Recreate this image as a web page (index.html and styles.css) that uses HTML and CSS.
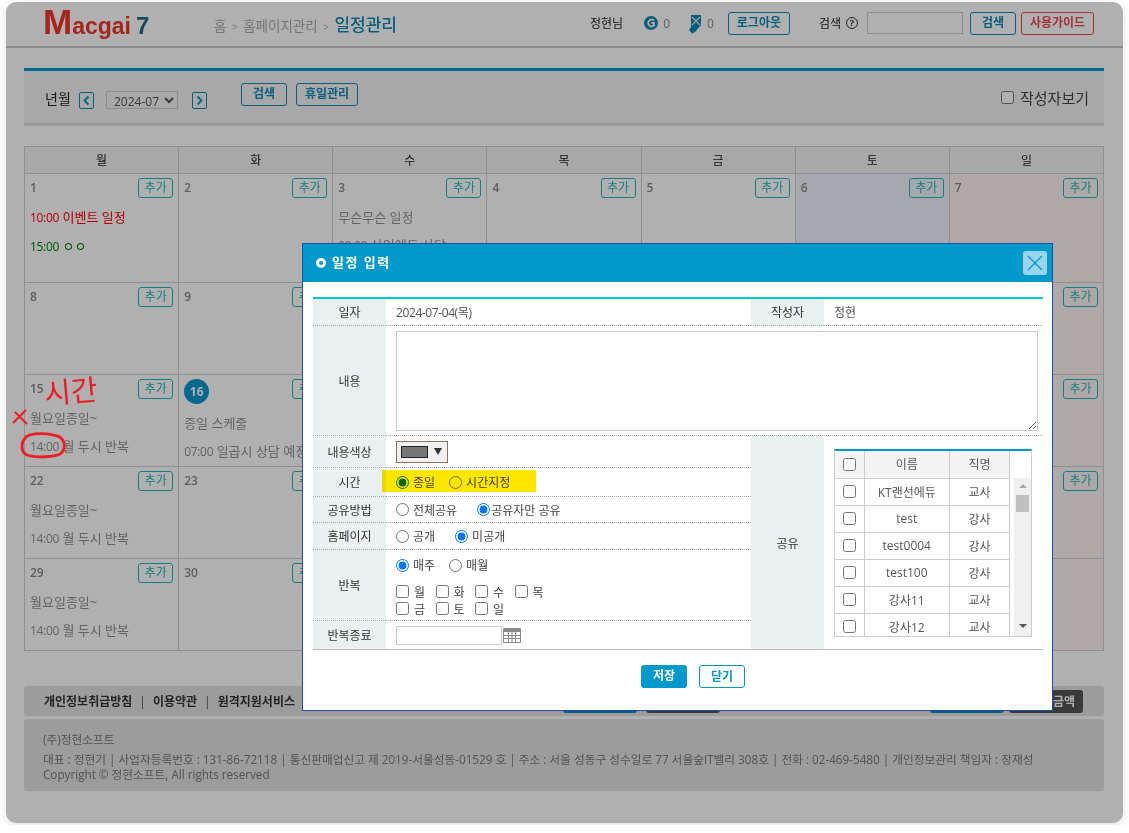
FILE: index.html
```html
<!DOCTYPE html>
<html lang="ko">
<head>
    <meta charset="UTF-8">
    <title>일정관리</title>
    <link rel="stylesheet" href="styles.css">
</head>
<body>

<div class="page">

    <!-- Top header -->
    <div class="header">
        <div class="logo"><span class="logo-m">M</span>acgai<span class="logo-7">7</span></div>
        <div class="crumbs">홈 <small>&gt;</small> 홈페이지관리 <small>&gt;</small> <b>일정관리</b></div>
        <div class="user">
            <span class="user-name">정현님</span>
            <svg class="ico-coin" width="14" height="14" viewBox="0 0 14 14"><circle cx="7" cy="7" r="7" fill="#0a86b4"/><path d="M10 4.6A3.4 3.4 0 1 0 10 9.4V6.9H7.4" fill="none" stroke="#f2f2f2" stroke-width="2"/></svg>
            <span class="count">0</span>
            <svg class="ico-ticket" width="14" height="20" viewBox="0 0 14 20"><path d="M3 1H13V11L7 18L4 19.5L1 16L3 13Z" fill="#0a86b4"/><path d="M4 3L12 11M12 3L4 11" stroke="#e8e8e8" stroke-width="1.3"/></svg>
            <span class="count">0</span>
            <a class="btn btn-logout">로그아웃</a>
            <span class="search-label">검색</span>
            <span class="help">?</span>
            <input class="search-input" type="text">
            <a class="btn btn-search">검색</a>
            <a class="btn btn-red">사용가이드</a>
        </div>
    </div>

    <!-- Search toolbar -->
    <div class="toolbar">
        <div class="month">
            <span class="month-label">년월</span>
            <a class="arrow"><svg width="9" height="11" viewBox="0 0 9 11"><path d="M6.5 1.5L2.5 5.5L6.5 9.5" fill="none" stroke="#0099cc" stroke-width="2"/></svg></a>
            <select class="month-select"><option>2024-07</option></select>
            <a class="arrow"><svg width="9" height="11" viewBox="0 0 9 11"><path d="M2.5 1.5L6.5 5.5L2.5 9.5" fill="none" stroke="#0099cc" stroke-width="2"/></svg></a>
        </div>
        <a class="btn btn-search btn-tool">검색</a>
        <a class="btn btn-holiday btn-tool">휴일관리</a>
        <label class="writer"><input type="checkbox">작성자보기</label>
    </div>

    <!-- Calendar -->
    <table class="calendar">
        <thead>
            <tr><th>월</th><th>화</th><th>수</th><th>목</th><th>금</th><th>토</th><th>일</th></tr>
        </thead>
        <tbody>
            <tr class="week-first">
                <td><div class="day"><span>1</span><a class="add">추가</a></div><p class="ev ev-red"><span class="tm">10:00</span> 이벤트 일정</p><p class="ev ev-green"><span class="tm">15:00</span> ㅇㅇ</p></td>
                <td><div class="day"><span>2</span><a class="add">추가</a></div></td>
                <td><div class="day"><span>3</span><a class="add">추가</a></div><p class="ev">무슨무슨 일정</p><p class="ev"><span class="tm">09:00</span> 상인에트 상담</p></td>
                <td><div class="day"><span>4</span><a class="add">추가</a></div></td>
                <td><div class="day"><span>5</span><a class="add">추가</a></div></td>
                <td class="sat"><div class="day"><span>6</span><a class="add">추가</a></div></td>
                <td class="sun"><div class="day"><span>7</span><a class="add">추가</a></div></td>
            </tr>
            <tr>
                <td><div class="day"><span>8</span><a class="add">추가</a></div></td>
                <td><div class="day"><span>9</span><a class="add">추가</a></div></td>
                <td><div class="day"><span>10</span><a class="add">추가</a></div></td>
                <td><div class="day"><span>11</span><a class="add">추가</a></div></td>
                <td><div class="day"><span>12</span><a class="add">추가</a></div></td>
                <td class="sat"><div class="day"><span>13</span><a class="add">추가</a></div></td>
                <td class="sun"><div class="day"><span>14</span><a class="add">추가</a></div></td>
            </tr>
            <tr>
                <td><div class="day"><span>15</span><a class="add">추가</a></div><p class="ev">월요일종일~</p><p class="ev"><span class="tm">14:00</span> 월 두시 반복</p></td>
                <td><div class="day"><span class="today">16</span><a class="add">추가</a></div><p class="ev">종일 스케줄</p><p class="ev"><span class="tm">07:00</span> 일곱시 상담 예정</p></td>
                <td><div class="day"><span>17</span><a class="add">추가</a></div></td>
                <td><div class="day"><span>18</span><a class="add">추가</a></div></td>
                <td><div class="day"><span>19</span><a class="add">추가</a></div></td>
                <td class="sat"><div class="day"><span>20</span><a class="add">추가</a></div></td>
                <td class="sun"><div class="day"><span>21</span><a class="add">추가</a></div></td>
            </tr>
            <tr>
                <td><div class="day"><span>22</span><a class="add">추가</a></div><p class="ev">월요일종일~</p><p class="ev"><span class="tm">14:00</span> 월 두시 반복</p></td>
                <td><div class="day"><span>23</span><a class="add">추가</a></div></td>
                <td><div class="day"><span>24</span><a class="add">추가</a></div></td>
                <td><div class="day"><span>25</span><a class="add">추가</a></div></td>
                <td><div class="day"><span>26</span><a class="add">추가</a></div></td>
                <td class="sat"><div class="day"><span>27</span><a class="add">추가</a></div></td>
                <td class="sun"><div class="day"><span>28</span><a class="add">추가</a></div></td>
            </tr>
            <tr>
                <td><div class="day"><span>29</span><a class="add">추가</a></div><p class="ev">월요일종일~</p><p class="ev"><span class="tm">14:00</span> 월 두시 반복</p></td>
                <td><div class="day"><span>30</span><a class="add">추가</a></div></td>
                <td><div class="day"><span>31</span><a class="add">추가</a></div></td>
                <td></td>
                <td></td>
                <td class="sat"></td>
                <td class="sun"></td>
            </tr>
        </tbody>
    </table>

    <!-- Footer -->
    <div class="foot-links">
        <span><b>개인정보취급방침</b><i>|</i><b>이용약관</b><i>|</i><b>원격지원서비스</b></span>
        <div class="foot-btns">
            <a class="foot-btn foot-blue"></a>
            <a class="foot-btn foot-dark"></a>
            <a class="foot-btn foot-blue foot-push"></a>
            <a class="foot-btn foot-dark">서비스 금액</a>
        </div>
    </div>
    <div class="foot-info">
        <p class="foot-company">(주)정현소프트</p>
        <p>대표 : 정현기 | 사업자등록번호 : 131-86-72118 | 통신판매업신고 제 2019-서울성동-01529 호 | 주소 : 서울 성동구 성수일로 77 서울숲IT밸리 308호 | 전화 : 02-469-5480 | 개인정보관리 책임자 : 장재성</p>
        <p>Copyright © 정현소프트, All rights reserved</p>
    </div>

    <!-- Overlay -->
    <div class="overlay"></div>

    <!-- Hand drawn marks on the screenshot -->
    <span class="hand-text">시간</span>
    <svg class="hand-x" width="16" height="16" viewBox="0 0 16 16"><path d="M14 1L1 14M3 3L15 15" fill="none" stroke="#ee1c25" stroke-width="2"/></svg>
    <svg class="hand-circle" width="48" height="28" viewBox="0 0 48 28"><path d="M40 5C30 1 12 0 6 5C1 10 0 20 7 23C15 26 35 25 40 22C46 18 46 8 38 4" fill="none" stroke="#ee1c25" stroke-width="2.8"/></svg>

    <!-- Schedule dialog -->
    <div class="dialog">
        <div class="dialog-head">
            <span class="dialog-dot"></span>
            <span class="dialog-title">일정 입력</span>
            <a class="dialog-close"><svg width="16" height="16" viewBox="0 0 16 16"><path d="M1 1L15 15M15 1L1 15" stroke="#0099cc" stroke-width="1.3"/></svg></a>
        </div>

        <div class="dialog-body">
            <table class="form">
                <colgroup><col class="col-label"><col class="col-main"><col class="col-label"><col></colgroup>
                <tr class="r-date">
                    <th>일자</th>
                    <td class="cell-date">2024-07-04(목)</td>
                    <th>작성자</th>
                    <td>정현</td>
                </tr>
                <tr class="r-text">
                    <th>내용</th>
                    <td colspan="3" class="cell-text"><textarea></textarea></td>
                </tr>
                <tr class="r-color">
                    <th>내용색상</th>
                    <td><span class="color-pick"><span class="swatch"></span><span class="caret"></span></span></td>
                    <th rowspan="6" class="last">공유</th>
                    <td rowspan="6" class="cell-share last">
                        <div class="share-box">
                            <table class="share">
                                <tr><th class="c-check"><input type="checkbox"></th><th>이름</th><th class="c-job">직명</th></tr>
                                <tr><td><input type="checkbox"></td><td>KT랜선에듀</td><td>교사</td></tr>
                                <tr><td><input type="checkbox"></td><td>test</td><td>강사</td></tr>
                                <tr><td><input type="checkbox"></td><td>test0004</td><td>강사</td></tr>
                                <tr><td><input type="checkbox"></td><td>test100</td><td>강사</td></tr>
                                <tr><td><input type="checkbox"></td><td>강사11</td><td>교사</td></tr>
                                <tr><td><input type="checkbox"></td><td>강사12</td><td>교사</td></tr>
                            </table>
                            <div class="scrollbar">
                                <span class="sb-up"></span>
                                <span class="sb-thumb"></span>
                                <span class="sb-down"></span>
                            </div>
                        </div>
                    </td>
                </tr>
                <tr class="r-time">
                    <th>시간</th>
                    <td>
                        <div class="opts opts-narrow marked">
                            <label class="opt"><input type="radio" name="time" checked>종일</label>
                            <label class="opt"><input type="radio" name="time">시간지정</label>
                        </div>
                    </td>
                </tr>
                <tr class="r-share">
                    <th>공유방법</th>
                    <td>
                        <div class="opts">
                            <label class="opt"><input type="radio" name="share">전체공유</label>
                            <label class="opt opt-tight"><input type="radio" name="share" checked>공유자만 공유</label>
                        </div>
                    </td>
                </tr>
                <tr class="r-home">
                    <th>홈페이지</th>
                    <td>
                        <div class="opts">
                            <label class="opt"><input type="radio" name="home">공개</label>
                            <label class="opt"><input type="radio" name="home" checked>미공개</label>
                        </div>
                    </td>
                </tr>
                <tr class="r-repeat">
                    <th>반복</th>
                    <td class="cell-repeat">
                        <div class="opts opts-narrow">
                            <label class="opt"><input type="radio" name="repeat" checked>매주</label>
                            <label class="opt"><input type="radio" name="repeat">매월</label>
                        </div>
                        <div class="days">
                            <label class="opt"><input type="checkbox">월</label>
                            <label class="opt"><input type="checkbox">화</label>
                            <label class="opt"><input type="checkbox">수</label>
                            <label class="opt"><input type="checkbox">목</label>
                            <label class="opt"><input type="checkbox">금</label>
                            <label class="opt"><input type="checkbox">토</label>
                            <label class="opt"><input type="checkbox">일</label>
                        </div>
                    </td>
                </tr>
                <tr class="r-end">
                    <th class="last">반복종료</th>
                    <td class="last">
                        <div class="end-date">
                            <input type="text">
                            <svg width="18" height="15" viewBox="0 0 18 15"><rect width="18" height="15" rx="1" fill="#8a8a8a"/><rect x="1" y="4" width="16" height="10" fill="#fff"/><path d="M1 7.5H17M1 10.5H17M5.5 4V14M9 4V14M12.5 4V14" stroke="#8a8a8a"/></svg>
                        </div>
                    </td>
                </tr>
            </table>

            <div class="dialog-actions">
                <a class="btn-save">저장</a>
                <a class="btn-close">닫기</a>
            </div>
        </div>
    </div>

</div>

</body>
</html>
```

FILE: styles.css
```css
* {
    box-sizing: border-box;
}

body {
    margin: 0;
    background-color: #fff;
    font-family: "Open Sans", "Noto Sans CJK KR", sans-serif;
    font-size: 12px;
    color: #333;
}

p {
    margin: 0;
}

.page {
    position: relative;
    width: 1117px;
    height: 821px;
    margin: 2px 6px;
    padding: 0 19px 0 18px;
    background-color: #fff;
    border-radius: 10px;
    box-shadow: 0 2px 10px rgba(0, 0, 0, 0.12);
}

.overlay {
    position: absolute;
    top: 0;
    left: 0;
    width: 100%;
    height: 100%;
    background-color: rgba(0, 0, 0, 0.31);
    border-radius: 10px;
}

/* Header */
.header {
    display: flex;
    align-items: center;
    height: 46px;
    margin: 0 -19px 0 -18px;
    padding: 0 29px 2px 37px;
    border-bottom: 2px solid #cbcbcb;
}

.logo {
    width: 171px;
    margin-top: -3px;
    font-family: "Liberation Sans", sans-serif;
    font-size: 23px;
    font-weight: bold;
    color: #f0352a;
    white-space: nowrap;
}

.logo-m {
    font-size: 35px;
}

.logo-7 {
    margin-left: 5px;
    font-size: 24px;
    color: #1f6e88;
}

.crumbs {
    font-size: 13.5px;
    color: #aaa;
    white-space: nowrap;
}

.crumbs small {
    margin: 0 2px;
    font-size: 10px;
}

.crumbs b {
    font-size: 17px;
    font-weight: normal;
    color: #0a8ab8;
    text-shadow: 0 0 0 #0a8ab8;
}

.user {
    display: flex;
    align-items: center;
    margin-left: auto;
}

.user-name {
    margin-right: 21px;
    color: #222;
}

.count {
    margin: 0 18px 0 5px;
    color: #888;
}

.ico-ticket {
    margin-top: 2px;
}

.search-label {
    margin-left: 29px;
    color: #222;
}

.help {
    width: 12px;
    height: 12px;
    margin-left: 5px;
    border: 1px solid #333;
    border-radius: 50%;
    font-size: 9px;
    font-weight: bold;
    line-height: 10px;
    text-align: center;
}

.search-input {
    width: 96px;
    height: 22px;
    margin-left: 9px;
    border: 1px solid #ccc;
    background-color: #fff;
}

.btn {
    display: block;
    height: 23px;
    border: 1px solid #0a8ab8;
    border-radius: 3px;
    font-weight: bold;
    line-height: 20px;
    text-align: center;
    color: #0a8ab8;
    white-space: nowrap;
}

.btn-logout {
    width: 62px;
    margin-left: -4px;
}

.btn-search {
    width: 46px;
    margin-left: 7px;
}

.btn-red {
    width: 73px;
    margin-left: 5px;
    border-color: #ee4656;
    color: #ee4656;
}

/* Toolbar */
.toolbar {
    display: flex;
    height: 58px;
    margin-top: 20px;
    padding: 12px 15px 0 21px;
    background-color: #f3f3f3;
    border-top: 3px solid #0099cc;
    border-bottom: 3px solid #dcdcdc;
}

.month {
    display: flex;
    align-items: center;
    height: 18px;
    margin-top: 8px;
}

.month-label {
    width: 34px;
    margin-top: -4px;
    font-size: 14px;
    color: #222;
}

.arrow {
    display: flex;
    align-items: center;
    justify-content: center;
    width: 15px;
    height: 17px;
    border: 1px solid #0a8ab8;
    border-radius: 2px;
}

.month-select {
    width: 72px;
    height: 18px;
    margin: 0 14px 0 12px;
    padding: 0 0 0 3px;
    border: 1px solid #ccc;
    background-color: #f3f3f3;
    font-family: inherit;
    font-size: 12px;
    color: #555;
}

.btn-tool {
    margin-left: 34px;
}

.btn-holiday {
    width: 62px;
    margin-left: 9px;
}

.writer {
    display: flex;
    align-items: center;
    margin-top: 4px;
    margin-left: auto;
    height: 20px;
    font-size: 15px;
    color: #444;
}

input[type="checkbox"],
input[type="radio"] {
    flex: none;
    width: 13px;
    height: 13px;
    margin: 0;
}

.writer input {
    margin-right: 6px;
}

/* Calendar */
.calendar {
    width: 100%;
    margin-top: 20px;
    border-collapse: collapse;
    table-layout: fixed;
}

.calendar th,
.calendar td {
    border: 1px solid #d0d0d0;
    padding: 0;
}

.calendar th {
    height: 27px;
    background-color: #f3f3f3;
    font-weight: normal;
    color: #222;
}

.calendar td {
    height: 92px;
    vertical-align: top;
    overflow: hidden;
}

.calendar .week-first td {
    height: 109px;
}

.calendar .sat {
    background-color: #f0f3fd;
}

.calendar .sun {
    background-color: #fdf3f3;
}

.day {
    display: flex;
    justify-content: space-between;
    align-items: flex-start;
    padding: 4px 5px 0 5px;
    color: #888;
    font-weight: 600;
}

.day span {
    line-height: 20px;
}

.day .today {
    width: 25px;
    height: 25px;
    background-color: #0099cc;
    border-radius: 50%;
    font-weight: bold;
    line-height: 25px;
    text-align: center;
    color: #fff;
}

.add {
    width: 35px;
    height: 20px;
    border: 1px solid #1fb8b8;
    border-radius: 3px;
    font-weight: normal;
    line-height: 17px;
    text-align: center;
    color: #1fb8b8;
}

.ev {
    padding-left: 5px;
    font-size: 13px;
    line-height: 28px;
    color: #909090;
    white-space: nowrap;
}

.ev .tm {
    font-size: 12px;
    letter-spacing: -0.3px;
}

.ev:first-of-type {
    margin-top: 5px;
}

.ev-red {
    color: #f00;
}

.ev-green {
    color: #008000;
}

/* Footer */
.foot-links {
    position: relative;
    display: flex;
    align-items: center;
    height: 30px;
    margin-top: 35px;
    padding-left: 20px;
    background-color: #e2e2e2;
    border-radius: 3px;
}

.foot-links b {
    color: #333;
}

.foot-links i {
    margin: 0 7px;
    font-style: normal;
    color: #555;
}

.foot-btns {
    display: flex;
    margin-left: auto;
    margin-right: 21px;
}

.foot-btn {
    width: 74px;
    height: 23px;
    margin-left: 9px;
    border-radius: 3px;
    font-weight: bold;
    line-height: 23px;
    text-align: center;
    color: #fff;
}

.foot-blue {
    background-color: #0a8ab8;
}

.foot-dark {
    background-color: #555;
}

.foot-dark:last-child {
    margin-left: 5px;
}

.foot-push {
    margin-left: 210px;
}

.foot-info {
    height: 72px;
    margin-top: 3px;
    padding: 13px 19px;
    background-color: #e2e2e2;
    border-radius: 3px;
    font-size: 11.7px;
    line-height: 15px;
    color: #777;
}

.foot-company {
    margin-bottom: 5px;
}

/* Marks drawn by hand on the screenshot */
.hand-text {
    position: absolute;
    top: 366px;
    left: 38px;
    font-size: 29px;
    color: #ee1c25;
    transform: rotate(-5deg);
}

.hand-x {
    position: absolute;
    top: 407px;
    left: 6px;
}

.hand-circle {
    position: absolute;
    top: 430px;
    left: 14px;
}

/* Dialog */
.dialog {
    position: absolute;
    top: 241px;
    left: 296px;
    width: 751px;
    height: 468px;
    background-color: #fff;
    border: 1px solid #1f4fa8;
}

.dialog-head {
    display: flex;
    align-items: center;
    height: 38px;
    padding: 0 5px 0 13px;
    background-color: #0099cc;
    color: #fff;
}

.dialog-dot {
    width: 10px;
    height: 10px;
    border: 3px solid #fff;
    border-radius: 50%;
}

.dialog-title {
    margin: -3px 0 0 6px;
    font-size: 13px;
    font-weight: bold;
    letter-spacing: 1.5px;
}

.dialog-close {
    display: flex;
    align-items: center;
    justify-content: center;
    width: 24px;
    height: 24px;
    margin-left: auto;
    background-color: #99d6ee;
    border-radius: 3px;
}

.dialog-body {
    padding: 15px 9px 0 10px;
}

.form {
    width: 730px;
    border-collapse: separate;
    border-spacing: 0;
    border-top: 2px solid #00cccc;
    table-layout: fixed;
}

.col-label {
    width: 73px;
}

.col-main {
    width: 365px;
}

.form > tbody > tr > th,
.form > tbody > tr > td {
    padding: 0;
    border-bottom: 1px dotted #aaa;
    font-weight: normal;
}

.form > tbody > tr > th {
    background-color: #e8f0f0;
    text-align: center;
    color: #333;
}

.form > tbody > tr > td {
    padding-left: 10px;
    color: #555;
}

.form > tbody > tr > .cell-date {
    letter-spacing: -0.4px;
}

.form > tbody > tr > .last {
    border-bottom: 1px solid #bbb;
}

.r-date { height: 27px; }
.r-text { height: 110px; }
.r-color { height: 32px; }
.r-time { height: 29px; }
.r-share { height: 26px; }
.r-home { height: 27px; }
.r-repeat { height: 71px; }
.r-end { height: 29px; }

.form textarea {
    display: block;
    width: 642px;
    height: 100px;
    border: 1px solid #ccc;
}

.color-pick {
    display: flex;
    align-items: center;
    width: 52px;
    height: 22px;
    padding-left: 4px;
    background-color: #f0f0f0;
    border: 1px solid #8b7355;
}

.swatch {
    width: 27px;
    height: 12px;
    background-color: #777;
    border: 1px solid #222;
}

.caret {
    width: 0;
    height: 0;
    margin-left: 6px;
    border-top: 7px solid #333;
    border-left: 4px solid transparent;
    border-right: 4px solid transparent;
}

.opts {
    display: flex;
    gap: 20px;
}

.opts-narrow {
    gap: 14px;
}

.opt {
    display: flex;
    align-items: center;
    gap: 4px;
    color: #444;
    white-space: nowrap;
}

.opt-tight {
    gap: 1px;
}

/* Yellow highlighter over the time options */
.marked {
    position: relative;
}

.marked::after {
    content: "";
    position: absolute;
    top: -3px;
    left: -14px;
    width: 154px;
    height: 22px;
    background-color: #ffe600;
    mix-blend-mode: multiply;
}

.form > tbody > tr > .cell-repeat {
    vertical-align: top;
    padding-top: 6px;
}

.days {
    display: grid;
    grid-template-columns: repeat(4, 39.5px);
    row-gap: 4px;
    margin-top: 11px;
}

.days .opt {
    height: 13px;
    gap: 5px;
}

.end-date {
    display: flex;
    align-items: center;
}

.end-date input {
    width: 106px;
    height: 19px;
    margin-right: 1px;
    border: 1px solid #ccc;
}

/* Share list */
.form > tbody > tr > .cell-share {
    vertical-align: top;
    padding-top: 13px;
}

.share-box {
    display: flex;
    width: 198px;
    height: 188px;
    overflow: hidden;
    border: 1px solid #ccc;
    border-top: 2px solid #0099cc;
}

.share {
    flex: none;
    align-self: flex-start;
    width: 175px;
    border-collapse: collapse;
    table-layout: fixed;
}

.share th,
.share td {
    height: 27px;
    padding: 0;
    border: 1px solid #ccc;
    border-top: 0;
    font-weight: normal;
    text-align: center;
    color: #555;
}

.share th {
    background-color: #f4f4f4;
}

.share .c-check {
    width: 29px;
}

.share .c-job {
    width: 60px;
}

.share th:first-child,
.share td:first-child {
    border-left: 0;
}

.share input {
    display: block;
    margin: 0 auto;
}

.scrollbar {
    display: flex;
    flex-direction: column;
    align-items: center;
    width: 17px;
    margin: 27px 0 0 4px;
    padding-top: 6px;
    background-color: #f0f0f0;
}

.sb-up,
.sb-down {
    width: 0;
    height: 0;
    border-left: 4px solid transparent;
    border-right: 4px solid transparent;
}

.sb-up {
    border-bottom: 4px solid #aaa;
}

.sb-thumb {
    width: 13px;
    height: 17px;
    margin-top: 7px;
    background-color: #c0c0c0;
}

.sb-down {
    margin-top: 112px;
    border-top: 4px solid #555;
}

.dialog-actions {
    display: flex;
    justify-content: center;
    gap: 12px;
    margin-top: 15px;
    padding-left: 30px;
}

.btn-save,
.btn-close {
    width: 46px;
    height: 23px;
    border-radius: 3px;
    font-weight: bold;
    line-height: 21px;
    text-align: center;
}

.btn-save {
    background-color: #0099cc;
    color: #fff;
}

.btn-close {
    border: 1px solid #0099cc;
    color: #0099cc;
}
```
